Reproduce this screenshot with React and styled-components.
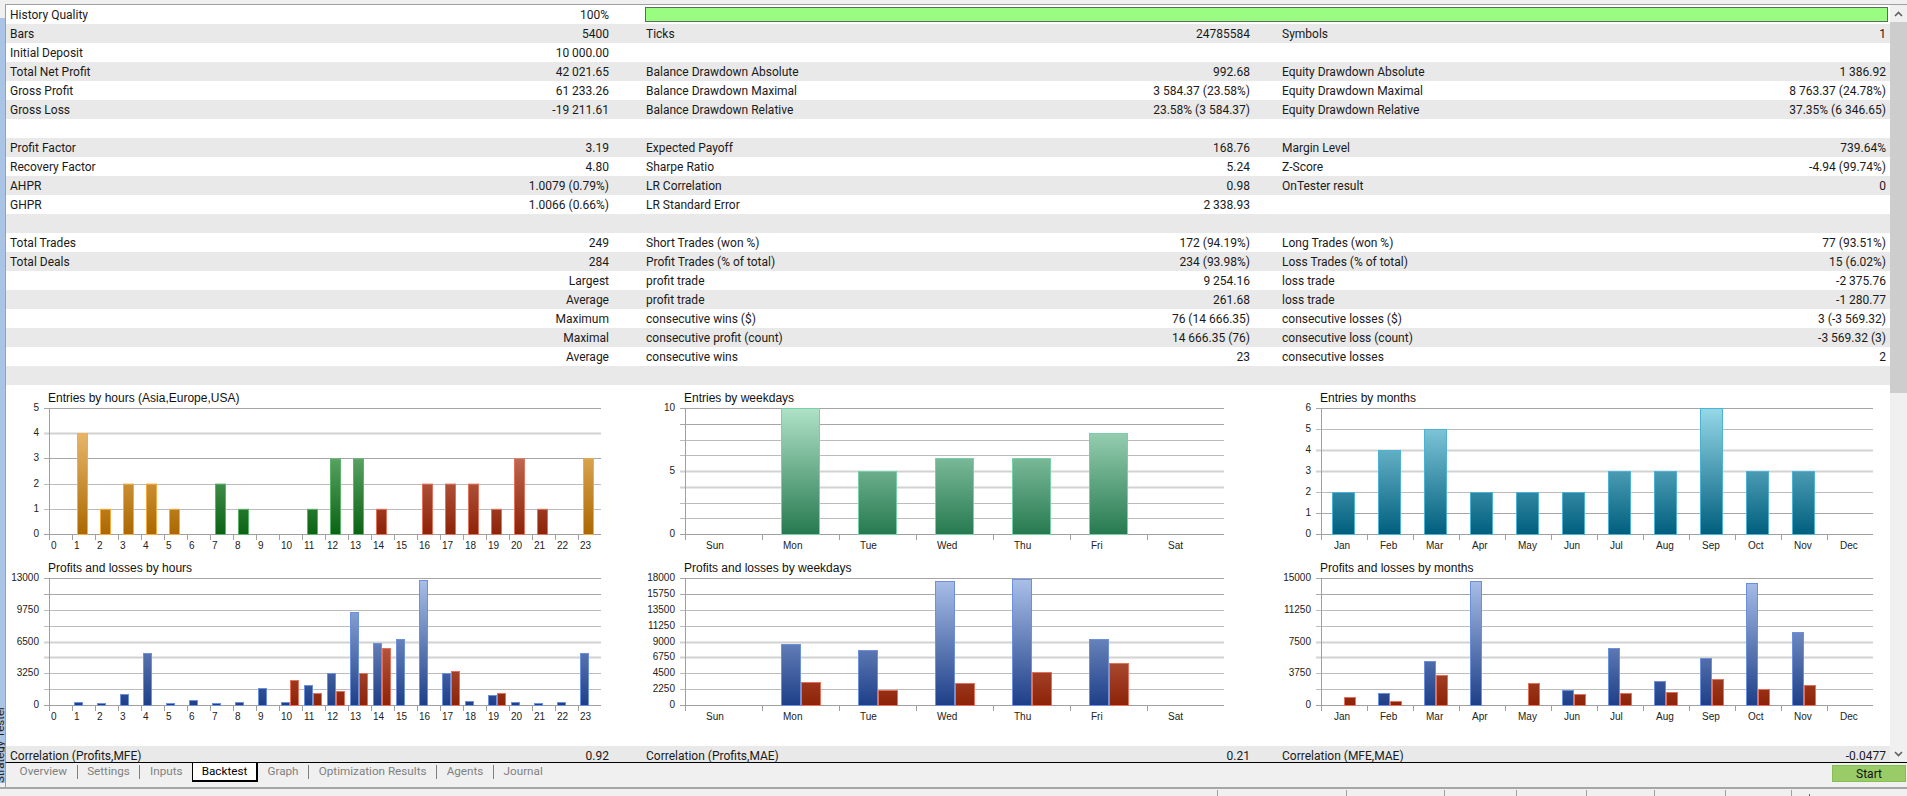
import React from 'react';
import styled, { createGlobalStyle } from 'styled-components';

const GlobalStyle = createGlobalStyle`
  html, body {
    margin: 0;
    padding: 0;
    background: #f0f0f0;
  }
`;

const Window = styled.div`
  width: 1907px;
  height: 796px;
  display: flex;
  flex-direction: column;
  overflow: hidden;
  background: #f0f0f0;
  font-family: Roboto, 'Liberation Sans', sans-serif;
  font-size: 12px;
  color: #1a1a1a;
`;

const Workspace = styled.div`
  display: flex;
  height: 787px;
  padding-top: 4px;
  box-sizing: border-box;
`;

const SideStrip = styled.div`
  position: relative;
  width: 5px;
  margin: 14px 0 4px;
  background: #a9c4e4;
  overflow: hidden;
  flex-shrink: 0;
`;

const SideLabel = styled.span`
  position: absolute;
  right: -2px;
  bottom: 0;
  writing-mode: vertical-rl;
  transform: rotate(180deg);
  font-size: 11.5px;
  line-height: 14px;
  color: #222;
  white-space: nowrap;
`;

const Column = styled.div`
  flex: 1;
  min-width: 0;
  display: flex;
  flex-direction: column;
`;

const Frame = styled.div`
  height: 758px;
  display: flex;
  box-sizing: border-box;
  border-top: 1px solid #a0a0a0;
  border-left: 1px solid #a0a0a0;
`;

const Report = styled.div`
  width: 1884px;
  background: #fff;
  overflow: hidden;
`;

const Row = styled.div`
  display: grid;
  grid-template-columns: 638px 636px 1fr;
  height: 19px;
  line-height: 21px;
  background: ${(p) => (p.$shade ? '#e9e9e9' : '#fff')};
`;

const Cell = styled.div`
  display: flex;
  justify-content: space-between;
  height: 19px;
  padding-left: 2px;
  padding-right: 4px;
  white-space: nowrap;

  &:nth-child(1) {
    padding-left: 4px;
    padding-right: 35px;
  }
  &:nth-child(2) {
    padding-right: 30px;
  }
`;

const Wide = styled.div`
  grid-column: 2 / 4;
  padding: 2px 2px 2px 1px;
`;

const Progress = styled.div`
  height: 15px;
  box-sizing: border-box;
  background: #98fd80;
  border: 1px solid #5c6b5c;
`;

const Charts = styled.div`
  display: grid;
  grid-template-columns: 636px 636px 1fr;
  grid-auto-rows: 170px;
  padding-bottom: 21px;
`;

const Panel = styled.div`
  display: flex;
  flex-direction: column;
`;

const ChartTitle = styled.div`
  height: 22px;
  padding: 5px 0 0 42px;
  box-sizing: border-box;
  font-family: 'Liberation Sans', Arial, sans-serif;
  font-size: 12px;
  line-height: 16px;
  color: #111;
`;

const ChartSvg = styled.svg`
  display: block;
  overflow: visible;
  font-family: 'Liberation Sans', Arial, sans-serif;
  font-size: 10px;
  fill: #222;
`;

const Scrollbar = styled.div`
  width: 17px;
  flex-shrink: 0;
  display: flex;
  flex-direction: column;
  align-items: center;
  background: #f0f0f0;
`;

const ArrowBox = styled.div`
  height: 17px;
  width: 17px;
  display: flex;
  align-items: center;
  justify-content: center;
  color: #606060;
`;

const Thumb = styled.div`
  width: 17px;
  height: 371px;
  background: #cdcdcd;
`;

const Track = styled.div`
  flex: 1;
`;

const TabBar = styled.div`
  height: 25px;
  display: flex;
  justify-content: space-between;
  box-sizing: border-box;
  border-left: 1px solid #a0a0a0;
  border-top: 1px solid #000;
`;

const Tabs = styled.div`
  display: flex;
  align-items: flex-start;
  padding-left: 4px;
`;

const Tab = styled.div`
  height: 19px;
  line-height: 16px;
  padding: 0 9.6px;
  box-sizing: border-box;
  font-size: 11.7px;
  color: #808080;
`;

const ActiveTab = styled(Tab)`
  padding: 0 8.6px;
  color: #000;
  background: #fff;
  border-left: 1px solid #000;
  border-right: 2px solid #000;
  border-bottom: 2px solid #000;
`;

const TabDivider = styled.div`
  width: 1px;
  height: 14px;
  margin-top: 2px;
  background: #808080;
`;

const StartButton = styled.button`
  width: 74px;
  height: 17px;
  margin: 2px 1px 0 0;
  padding: 0;
  font: inherit;
  color: #111;
  background: #99cc66;
  border: 1px solid #86bd58;
`;

const StatusBar = styled.div`
  position: relative;
  height: 9px;
  box-sizing: border-box;
  border-top: 2px solid #a6a6a6;
  background: #f0f0f0;
`;

const StatusDivider = styled.div`
  position: absolute;
  top: 1px;
  bottom: 0;
  left: ${(p) => p.$x}px;
  width: 1px;
  background: #a0a0a0;
`;

const StatusDot = styled.div`
  position: absolute;
  bottom: 0;
  left: 1809px;
  width: 1px;
  height: 2px;
  background: #2c8a2c;
`;

const rows = [
  [['History Quality', '100%']],
  [['Bars', '5400'], ['Ticks', '24785584'], ['Symbols', '1']],
  [['Initial Deposit', '10 000.00'], ['', ''], ['', '']],
  [['Total Net Profit', '42 021.65'], ['Balance Drawdown Absolute', '992.68'], ['Equity Drawdown Absolute', '1 386.92']],
  [['Gross Profit', '61 233.26'], ['Balance Drawdown Maximal', '3 584.37 (23.58%)'], ['Equity Drawdown Maximal', '8 763.37 (24.78%)']],
  [['Gross Loss', '-19 211.61'], ['Balance Drawdown Relative', '23.58% (3 584.37)'], ['Equity Drawdown Relative', '37.35% (6 346.65)']],
  [['', ''], ['', ''], ['', '']],
  [['Profit Factor', '3.19'], ['Expected Payoff', '168.76'], ['Margin Level', '739.64%']],
  [['Recovery Factor', '4.80'], ['Sharpe Ratio', '5.24'], ['Z-Score', '-4.94 (99.74%)']],
  [['AHPR', '1.0079 (0.79%)'], ['LR Correlation', '0.98'], ['OnTester result', '0']],
  [['GHPR', '1.0066 (0.66%)'], ['LR Standard Error', '2 338.93'], ['', '']],
  [['', ''], ['', ''], ['', '']],
  [['Total Trades', '249'], ['Short Trades (won %)', '172 (94.19%)'], ['Long Trades (won %)', '77 (93.51%)']],
  [['Total Deals', '284'], ['Profit Trades (% of total)', '234 (93.98%)'], ['Loss Trades (% of total)', '15 (6.02%)']],
  [['', 'Largest'], ['profit trade', '9 254.16'], ['loss trade', '-2 375.76']],
  [['', 'Average'], ['profit trade', '261.68'], ['loss trade', '-1 280.77']],
  [['', 'Maximum'], ['consecutive wins ($)', '76 (14 666.35)'], ['consecutive losses ($)', '3 (-3 569.32)']],
  [['', 'Maximal'], ['consecutive profit (count)', '14 666.35 (76)'], ['consecutive loss (count)', '-3 569.32 (3)']],
  [['', 'Average'], ['consecutive wins', '23'], ['consecutive losses', '2']],
  [['', ''], ['', ''], ['', '']],
];

const palettes = {
  orange: ['#f6ca84', '#ac6800', '#f7aa40'],
  green: ['#8ccb98', '#0a6312', '#5cb36a'],
  red: ['#dd9482', '#8d2307', '#e2725e'],
  blue: ['#abc1ea', '#1e3f88', '#6c90dc'],
  teal: ['#96d8e8', '#005f7e', '#4db3d5'],
  sea: ['#b0e2c8', '#277a50', '#79d0a5'],
};

const hours = Array.from({ length: 24 }, (_, i) => String(i));
const weekdays = ['Sun', 'Mon', 'Tue', 'Wed', 'Thu', 'Fri', 'Sat'];
const months = ['Jan', 'Feb', 'Mar', 'Apr', 'May', 'Jun', 'Jul', 'Aug', 'Sep', 'Oct', 'Nov', 'Dec'];

const orange = (i, v) => [i, v, 'orange'];
const green = (i, v) => [i, v, 'green'];
const red = (i, v) => [i, v, 'red'];

// bar heights are in px above the axis
const profitBands = [0, 0, 1, 1, 2, 2, 1, 1];

const charts = [
  {
    title: 'Entries by hours (Asia,Europe,USA)',
    cats: hours, catW: 23, labelX: 2, barW: 11, barX: 5, height: 126,
    yLabels: ['5', '4', '3', '2', '1', '0'],
    bands: [0, 2, 0, 1, 1],
    bars: [
      orange(1, 4), orange(2, 1), orange(3, 2), orange(4, 2), orange(5, 1),
      green(7, 2), green(8, 1), green(11, 1), green(12, 3), green(13, 3),
      red(14, 1), red(16, 2), red(17, 2), red(18, 2), red(19, 1), red(20, 3), red(21, 1),
      orange(23, 3),
    ].map(([i, v, c]) => [i, v * 25.2, c]),
  },
  {
    title: 'Entries by weekdays',
    cats: weekdays, catW: 77, labelX: 21, barW: 39, barX: 19, height: 126,
    yLabels: ['10', '', '', '', '5', '', '', '', '0'],
    bands: profitBands,
    bars: [[1, 126, 'sea'], [2, 63, 'sea'], [3, 76, 'sea'], [4, 76, 'sea'], [5, 101, 'sea']],
  },
  {
    title: 'Entries by months',
    cats: months, catW: 46, labelX: 13, barW: 23, barX: 11, height: 126,
    yLabels: ['6', '5', '4', '3', '2', '1', '0'],
    bands: [0, 1, 2, 2, 1, 0],
    bars: [[0, 2], [1, 4], [2, 5], [3, 2], [4, 2], [5, 2], [6, 3], [7, 3], [8, 6], [9, 3], [10, 3]].map(
      ([i, v]) => [i, v * 21, 'teal']
    ),
  },
  {
    title: 'Profits and losses by hours',
    cats: hours, catW: 23, labelX: 2, barW: 9, barX: 2, height: 127,
    yLabels: ['13000', '', '9750', '', '6500', '', '3250', '', '0'],
    bands: profitBands,
    profit: [[1, 3], [2, 2], [3, 11], [4, 52], [5, 2], [6, 5], [7, 2], [8, 3], [9, 17], [10, 3], [11, 20], [12, 32], [13, 93], [14, 62], [15, 66], [16, 125], [17, 32], [18, 4], [19, 10], [20, 3], [21, 2], [22, 3], [23, 52]],
    loss: [[10, 25], [11, 12], [12, 14], [13, 32], [14, 57], [17, 34], [19, 12]],
  },
  {
    title: 'Profits and losses by weekdays',
    cats: weekdays, catW: 77, labelX: 21, barW: 20, barX: 19, height: 127,
    yLabels: ['18000', '15750', '13500', '11250', '9000', '6750', '4500', '2250', '0'],
    bands: profitBands,
    profit: [[1, 61], [2, 55], [3, 124], [4, 126], [5, 66]],
    loss: [[1, 23], [2, 15], [3, 22], [4, 33], [5, 42]],
  },
  {
    title: 'Profits and losses by months',
    cats: months, catW: 46, labelX: 13, barW: 12, barX: 11, height: 127,
    yLabels: ['15000', '', '11250', '', '7500', '', '3750', '', '0'],
    bands: profitBands,
    profit: [[1, 12], [2, 44], [3, 124], [5, 15], [6, 57], [7, 24], [8, 47], [9, 122], [10, 73]],
    loss: [[0, 8], [1, 4], [2, 30], [4, 22], [5, 11], [6, 12], [7, 13], [8, 26], [9, 16], [10, 20]],
  },
];

const PLOT_X = 43;
const PLOT_Y = 1;

const bandStroke = ['#a6a6a6', '#bcbcbc', '#d2d2d2'];
const bandWidth = [1, 1, 2];

const Chart = ({ id, chart }) => {
  const { cats, catW, labelX, barW, barX, height, yLabels, bands } = chart;
  const plotW = cats.length * catW;
  const bottom = PLOT_Y + height;
  const step = height / (yLabels.length - 1);

  const bars = chart.bars
    ? chart.bars.map(([i, h, c]) => ({ x: i * catW + barX, h, c }))
    : [
        ...chart.profit.map(([i, h]) => ({ x: i * catW + barX, h, c: 'blue' })),
        ...chart.loss.map(([i, h]) => ({ x: i * catW + barX + barW, h, c: 'red' })),
      ];
  const used = [...new Set(bars.map((b) => b.c))];

  return (
    <ChartSvg width={PLOT_X + plotW + 6} height={148}>
      <defs>
        {used.map((c) => (
          <linearGradient key={c} id={`${id}-${c}`} gradientUnits="userSpaceOnUse" x1="0" y1={PLOT_Y} x2="0" y2={bottom}>
            <stop offset="0" stopColor={palettes[c][0]} />
            <stop offset="1" stopColor={palettes[c][1]} />
          </linearGradient>
        ))}
      </defs>
      {yLabels.map((label, i) => {
        const y = Math.round(PLOT_Y + step * i);
        const band = i < bands.length ? bands[i] : 0;
        return (
          <g key={i}>
            <line
              x1={PLOT_X - 5}
              x2={PLOT_X + plotW}
              y1={y + 0.5}
              y2={y + 0.5}
              stroke={i === yLabels.length - 1 ? '#a0a0a0' : bandStroke[band]}
              strokeWidth={i === yLabels.length - 1 ? 1 : bandWidth[band]}
            />
            <text x={PLOT_X - 10} y={y + 3} textAnchor="end">
              {label}
            </text>
          </g>
        );
      })}
      <line x1={PLOT_X + 0.5} x2={PLOT_X + 0.5} y1={PLOT_Y} y2={bottom + 6} stroke="#a0a0a0" />
      {cats.map((label, i) => (
        <g key={label}>
          <line
            x1={PLOT_X + i * catW + 0.5}
            x2={PLOT_X + i * catW + 0.5}
            y1={bottom}
            y2={bottom + 6}
            stroke="#a0a0a0"
          />
          <text x={PLOT_X + i * catW + labelX} y={bottom + 15}>
            {label}
          </text>
        </g>
      ))}
      {bars.map((b, i) => (
        <rect
          key={i}
          x={PLOT_X + b.x + 0.5}
          y={bottom - b.h + 0.5}
          width={barW - 1}
          height={b.h}
          fill={`url(#${id}-${b.c})`}
          stroke={palettes[b.c][2]}
        />
      ))}
    </ChartSvg>
  );
};

const Chevron = ({ down }) => (
  <svg width="9" height="6" viewBox="0 0 9 6">
    <path d={down ? 'M1 1l3.5 3.5L8 1' : 'M1 5l3.5-3.5L8 5'} fill="none" stroke="currentColor" strokeWidth="1.6" />
  </svg>
);

const tabs = [
  { name: 'Overview', divider: true },
  { name: 'Settings', divider: true },
  { name: 'Inputs' },
  { name: 'Backtest', active: true },
  { name: 'Graph', divider: true },
  { name: 'Optimization Results', divider: true },
  { name: 'Agents', divider: true },
  { name: 'Journal' },
];

const statusDividers = [1217, 1346, 1444, 1516, 1586, 1654, 1725, 1791];

export default function App() {
  return (
    <>
      <GlobalStyle />
      <Window>
        <Workspace>
          <SideStrip>
            <SideLabel>Strategy Tester</SideLabel>
          </SideStrip>
          <Column>
            <Frame>
              <Report>
                {rows.map((row, i) => (
                  <Row key={i} $shade={i % 2 === 1}>
                    {row.map(([label, value], j) => (
                      <Cell key={j}>
                        <span>{label}</span>
                        <span>{value}</span>
                      </Cell>
                    ))}
                    {i === 0 && (
                      <Wide>
                        <Progress />
                      </Wide>
                    )}
                  </Row>
                ))}
                <Charts>
                  {charts.map((chart, i) => (
                    <Panel key={chart.title}>
                      <ChartTitle>{chart.title}</ChartTitle>
                      <Chart id={`chart${i}`} chart={chart} />
                    </Panel>
                  ))}
                </Charts>
                <Row $shade>
                  <Cell>
                    <span>Correlation (Profits,MFE)</span>
                    <span>0.92</span>
                  </Cell>
                  <Cell>
                    <span>Correlation (Profits,MAE)</span>
                    <span>0.21</span>
                  </Cell>
                  <Cell>
                    <span>Correlation (MFE,MAE)</span>
                    <span>-0.0477</span>
                  </Cell>
                </Row>
              </Report>
              <Scrollbar>
                <ArrowBox>
                  <Chevron />
                </ArrowBox>
                <Thumb />
                <Track />
                <ArrowBox>
                  <Chevron down />
                </ArrowBox>
              </Scrollbar>
            </Frame>
            <TabBar>
              <Tabs>
                {tabs.map(({ name, divider, active }) => (
                  <React.Fragment key={name}>
                    {active ? <ActiveTab>{name}</ActiveTab> : <Tab>{name}</Tab>}
                    {divider && <TabDivider />}
                  </React.Fragment>
                ))}
              </Tabs>
              <StartButton>Start</StartButton>
            </TabBar>
          </Column>
        </Workspace>
        <StatusBar>
          {statusDividers.map((x) => (
            <StatusDivider key={x} $x={x} />
          ))}
          <StatusDot />
        </StatusBar>
      </Window>
    </>
  );
}
